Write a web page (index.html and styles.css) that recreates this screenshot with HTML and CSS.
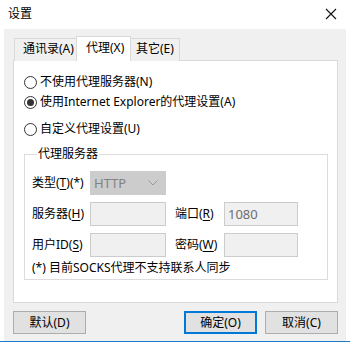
FILE: index.html
```html
<!DOCTYPE html>
<html lang="zh-CN">
<head>
<meta charset="utf-8">
<title>设置</title>
<link rel="stylesheet" href="styles.css">
</head>
<body>
<div class="window">
  <div class="titlebar">
    <span class="title">设置</span>
    <svg class="close" width="12" height="12" viewBox="0 0 12 12"><path d="M1 1 L11 11 M11 1 L1 11" stroke="#111" stroke-width="1.1" fill="none"/></svg>
  </div>
  <div class="client">
    <div class="tabs">
      <div class="tab tab1">通讯录(A)</div>
      <div class="tab tab-active">代理(X)</div>
      <div class="tab tab3">其它(E)</div>
    </div>
    <div class="panel">
      <label class="radio-row"><span class="radio"></span>不使用代理服务器(N)</label>
      <label class="radio-row"><span class="radio checked"></span>使用Internet Explorer的代理设置(A)</label>
      <label class="radio-row row3"><span class="radio"></span>自定义代理设置(U)</label>
      <fieldset class="group">
        <legend>代理服务器</legend>
        <div class="grid">
          <span class="lbl">类型(<u>T</u>)(*)</span>
          <div class="select"><span>HTTP</span><svg width="10" height="6" viewBox="0 0 10 6"><path d="M0.5 0.5 L5 5 L9.5 0.5" stroke="#9a9a9a" fill="none" stroke-width="1"/></svg></div>
          <span></span><span></span>
          <span class="lbl">服务器(<u>H</u>)</span>
          <div class="input"></div>
          <span class="lbl lbl2">端口(<u>R</u>)</span>
          <div class="input">1080</div>
          <span class="lbl">用户ID(<u>S</u>)</span>
          <div class="input"></div>
          <span class="lbl lbl2">密码(<u>W</u>)</span>
          <div class="input"></div>
        </div>
        <div class="note">(*) 目前SOCKS代理不支持联系人同步</div>
      </fieldset>
    </div>
    <div class="buttons">
      <div class="btn">默认(D)</div>
      <div class="spacer"></div>
      <div class="btn btn-default">确定(O)</div>
      <div class="btn">取消(C)</div>
    </div>
  </div>
  <div class="bottomline"></div>
</div>
</body>
</html>
```
FILE: styles.css
```css
html, body {
  margin: 0;
  padding: 0;
  background: #ffffff;
}
body {
  width: 350px;
  height: 346px;
  overflow: hidden;
  font-family: "Noto Sans", "Noto Sans CJK SC", sans-serif;
  font-size: 12px;
  color: #000;
}
.window {
  width: 350px;
  height: 346px;
  display: flex;
  flex-direction: column;
}
.titlebar {
  height: 29px;
  display: flex;
  align-items: center;
  justify-content: space-between;
  padding: 0 13px 0 8px;
  box-sizing: border-box;
}
.title {
  font-size: 12px;
  line-height: 16px;
  margin-top: -1px;
}
.close { margin-top: -2px; }
.client {
  margin-left: 4px;
  width: 342px;
  height: 312px;
  background: #f0f0f0;
  box-sizing: border-box;
  padding: 8px 8px 0 9px;
  display: flex;
  flex-direction: column;
}
.tabs {
  display: flex;
  align-items: flex-end;
  height: 24px;
  padding-left: 1px;
  margin-bottom: -1px;
  position: relative;
  z-index: 1;
}
.tab {
  box-sizing: border-box;
  border: 1px solid #d9d9d9;
  border-bottom: none;
  background: #f0f0f0;
  height: 23px;
  line-height: 20px;
  padding-left: 8px;
  white-space: nowrap;
}
.tab1 { width: 63px; }
.tab3 { width: 50px; margin-left: -1px; padding-left: 5px; }
.tab-active {
  width: 55px;
  height: 25px;
  background: #ffffff;
  padding-left: 9px;
  line-height: 22px;
  margin-left: -1px;
  position: relative;
  z-index: 2;
}
.panel {
  width: 325px;
  height: 243px;
  box-sizing: border-box;
  background: #ffffff;
  border: 1px solid #d9d9d9;
  padding: 11px 0 0 10px;
  display: flex;
  flex-direction: column;
  align-items: flex-start;
}
.radio-row {
  height: 20px;
  display: flex;
  align-items: center;
  line-height: 16px;
}
.row3 { margin-top: 7px; }
.radio {
  width: 11px;
  height: 11px;
  border: 1px solid #333333;
  border-radius: 50%;
  background: #fff;
  margin-right: 3px;
  display: flex;
  align-items: center;
  justify-content: center;
}
.radio.checked::after {
  content: "";
  width: 7px;
  height: 7px;
  border-radius: 50%;
  background: #333333;
}
.group {
  margin: 7px 0 0 0;
  width: 304px;
  box-sizing: border-box;
  border: 1px solid #dcdcdc;
  padding: 9px 6px 3px 7px;
  min-width: 0;
}
.group legend {
  padding: 0 1px;
  margin-left: 5px;
  line-height: 16px;
}
.grid {
  display: grid;
  grid-template-columns: 58px 76px 58px 74px;
  grid-template-rows: 24px 24px 24px;
  row-gap: 7px;
  align-items: center;
}
.lbl { white-space: nowrap; line-height: 16px; }
.lbl2 { margin-left: 9px; }
.lbl u { text-decoration-thickness: 1px; text-underline-offset: 2px; }
.select {
  height: 24px;
  box-sizing: border-box;
  background: #cccccc;
  border: 1px solid #cccccc;
  color: #838383;
  display: flex;
  align-items: center;
  justify-content: space-between;
  padding: 0 7px 0 3px;
  font-size: 13px;
}
.input {
  height: 24px;
  box-sizing: border-box;
  background: #f0f0f0;
  border: 1px solid #cccccc;
  color: #6d6d6d;
  padding-left: 3px;
  line-height: 22px;
  font-size: 13px;
}
.note {
  margin-top: 3px;
  line-height: 16px;
}
.buttons {
  display: flex;
  margin-top: 8px;
  height: 23px;
  width: 325px;
}
.spacer { flex: 1; }
.btn {
  width: 73px;
  height: 23px;
  box-sizing: border-box;
  background: #e1e1e1;
  border: 1px solid #adadad;
  display: flex;
  align-items: center;
  justify-content: center;
  line-height: 16px;
}
.btn + .btn { margin-left: 8px; }
.btn-default {
  border: 2px solid #0078d7;
}
.bottomline {
  height: 1px;
  background: #1979ca;
}
```
